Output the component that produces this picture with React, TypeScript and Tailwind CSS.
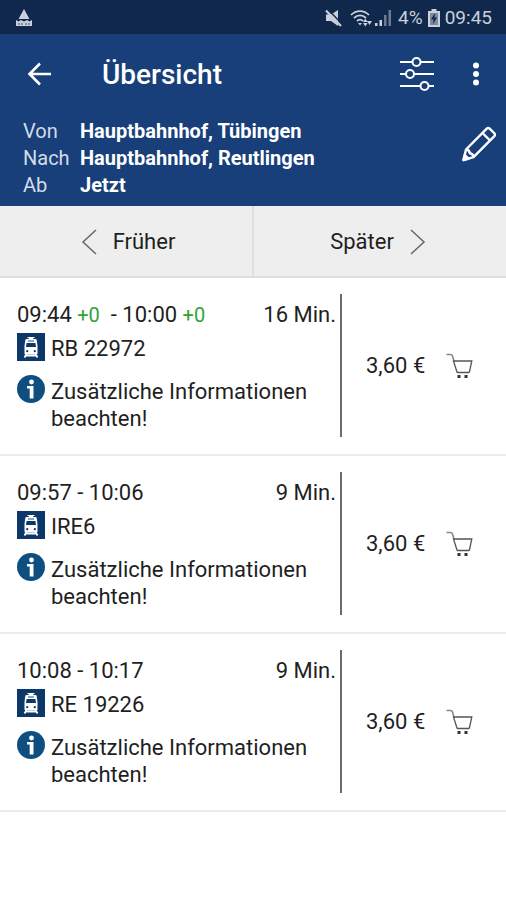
type Trip = {
  departure: string
  arrival: string
  delay?: string
  duration: string
  line: string
  price: string
}

const trips: Trip[] = [
  { departure: '09:44', arrival: '10:00', delay: '+0', duration: '16 Min.', line: 'RB 22972', price: '3,60 €' },
  { departure: '09:57', arrival: '10:06', duration: '9 Min.', line: 'IRE6', price: '3,60 €' },
  { departure: '10:08', arrival: '10:17', duration: '9 Min.', line: 'RE 19226', price: '3,60 €' },
]

const query = [
  { label: 'Von', value: 'Hauptbahnhof, Tübingen' },
  { label: 'Nach', value: 'Hauptbahnhof, Reutlingen' },
  { label: 'Ab', value: 'Jetzt' },
]

function StatusBar() {
  return (
    <div className="flex h-[34px] items-center bg-[#10284b] pt-[2px] pr-[14px] pl-4 text-[#c9d0dc]">
      <svg width="16" height="18" viewBox="0 0 16 18" fill="currentColor" aria-hidden="true">
        <path d="M8 0 13.500 10h-11Z" />
        <path d="M0 11l2.500 1.500L5 11l3 1.500L11 11l2.500 1.500L16 11v6H0Z" />
        <path d="M3 16v-2M6 16v-2M10 16v-2M13 16v-2" stroke="#10284b" strokeWidth="0.800" />
      </svg>
      <div className="ml-auto flex items-center">
        <svg width="17" height="18" viewBox="0 0 17 18" fill="currentColor" aria-hidden="true">
          <path d="M1 5.500h5L13 1v16l-7-5H1Z" />
          <path d="M2.500 0 17 15" stroke="#10284b" strokeWidth="1.500" />
          <path d="M1 1.500 16 17" stroke="currentColor" strokeWidth="2.200" />
        </svg>
        <svg className="ml-2" width="23" height="18" viewBox="0 0 23 18" fill="none" stroke="currentColor" strokeWidth="1.800" aria-hidden="true">
          <path d="M1 6c5-5.300 13-5.300 18 0M4 9c3.500-3.500 8.500-3.500 12 0M7 12c1.800-1.800 4.200-1.800 6 0" />
          <path d="M8 14h4l-2 2.500Z" fill="currentColor" stroke="none" />
          <path d="M13 13l2.300-3.500 2.300 3.500ZM17 12h5l-2.500 4ZM13 14h4.600l-2.300 3.500Z" fill="currentColor" stroke="none" />
        </svg>
        <svg className="ml-[2px]" width="17" height="18" viewBox="0 0 17 18" fill="currentColor" aria-hidden="true">
          <path d="M0 14h2.500v3H0ZM4.500 11H7v6H4.500Z" />
          <path d="M9 6h2.500v11H9ZM13.500 1H16v16h-2.500Z" opacity="0.5" />
        </svg>
        <span className="ml-[6px] text-[19px] leading-6">4%</span>
        <svg className="ml-[5px]" width="12" height="18" viewBox="0 0 12 18" aria-hidden="true">
          <path d="M3.500 0h5v2H12v16H0V2h3.500Z" fill="currentColor" />
          <path d="M2 4h8v12H2Z" fill="#7d899e" />
          <path d="M7 4 3 10.500h2.500L5 15l4-6.500H6.500Z" fill="#10284b" />
        </svg>
        <span className="ml-[5px] text-[19px] leading-6">09:45</span>
      </div>
    </div>
  )
}

function TrainIcon() {
  return (
    <svg className="shrink-0" width="28" height="28" viewBox="0 0 28 28" aria-hidden="true">
      <path d="M0 0h28v28H0Z" fill="#0c3768" />
      <path d="M10.500 4h7v1.200h-7Z" fill="#fff" />
      <path d="M12 5h4v1.500h-4Z" fill="#fff" />
      <path d="M9.500 6h9q1 0 1.200 1L20.500 13v7.500q0 1-1 1h-11q-1 0-1-1V13L8.300 7q.2-1 1.200-1Z" fill="#fff" />
      <path d="M9.600 10h8.800l.6 4H9Z" fill="#0c3768" />
      <path d="M11 8h6" stroke="#0c3768" strokeWidth="0.900" />
      <circle cx="10.200" cy="18.200" r="1.100" fill="#0c3768" />
      <circle cx="17.800" cy="18.200" r="1.100" fill="#0c3768" />
      <path d="M9.500 21 7.500 24.500M18.500 21l2 3.500M9 22.500h10" stroke="#fff" strokeWidth="1.800" />
    </svg>
  )
}

function InfoIcon() {
  return (
    <svg className="shrink-0" width="28" height="28" viewBox="0 0 28 28" aria-hidden="true">
      <circle cx="14" cy="14" r="14" fill="#0e4f7f" />
      <circle cx="14.500" cy="7" r="2.400" fill="#fff" />
      <path d="M10 11h6.500v12.500h-3.800V13.500H10Z" fill="#fff" />
    </svg>
  )
}

function CartIcon() {
  return (
    <svg width="28" height="26" viewBox="0 0 28 26" fill="none" stroke="#555" strokeWidth="1.300" aria-hidden="true">
      <path d="M0.500 1.500h4q1.500 0 2 1.500l1.500 5" stroke="#888" strokeWidth="1.600" />
      <path d="M7.500 8h18.300l-2.300 10.500q-.2 1-1.200 1H12q-1 0-1.200-1Z" />
      <path d="M11.500 22h3v3h-3ZM18.500 22h3v3h-3Z" fill="#333" stroke="none" />
    </svg>
  )
}

function Delay({ value }: { value: string }) {
  return <span className="text-[20px] text-[#2fa336]">{value}</span>
}

function TripRow({ trip }: { trip: Trip }) {
  return (
    <li className="flex border-b-2 border-[#ececec] pt-4 pb-[17px]">
      <div className="flex flex-1 flex-col border-r-2 border-[#6b6b6b] pt-[5px] pr-1 pb-[5px] pl-[17px]">
        <div className="flex justify-between leading-8 whitespace-pre">
          <span>
            {trip.departure}
            {trip.delay && <> <Delay value={trip.delay} /> </>}
            {' - '}
            {trip.arrival}
            {trip.delay && <> <Delay value={trip.delay} /></>}
          </span>
          <span>{trip.duration}</span>
        </div>
        <div className="mt-[2px] flex items-start gap-[6px]">
          <TrainIcon />
          <span className="leading-8">{trip.line}</span>
        </div>
        <div className="mt-[10px] flex gap-[6px]">
          <InfoIcon />
          <p className="pt-[3px] leading-[27px]">Zusätzliche Informationen beachten!</p>
        </div>
      </div>
      <div className="flex w-[164px] shrink-0 items-center pl-6">
        <span>{trip.price}</span>
        <button type="button" aria-label="In den Warenkorb" className="ml-auto pr-8">
          <CartIcon />
        </button>
      </div>
    </li>
  )
}

export default function App() {
  return (
    <div className="min-h-screen bg-white font-[Roboto,sans-serif] text-[22px] text-[#1f1f1f]">
      <StatusBar />

      <header className="bg-[#183f79] pb-[7px] text-white">
        <div className="flex h-20 items-center pr-[26px] pl-[27px]">
          <button type="button" aria-label="Zurück">
            <svg width="24" height="24" viewBox="0 0 24 24" fill="none" stroke="currentColor" strokeWidth="2.600" aria-hidden="true">
              <path d="M24 12H3M13 1.500 2.500 12 13 22.500" />
            </svg>
          </button>
          <h1 className="ml-[51px] pt-[2px] text-[28px] font-medium">Übersicht</h1>
          <button type="button" aria-label="Filter" className="ml-auto">
            <svg width="34" height="36" viewBox="0 0 34 36" fill="none" stroke="currentColor" strokeWidth="2" aria-hidden="true">
              <path d="M0 6h12.500M20.500 6H34M0 18h6M14 18h20M0 30h20.500M28.500 30H34" />
              <circle cx="16.500" cy="6" r="4" />
              <circle cx="10" cy="18" r="4" />
              <circle cx="24.500" cy="30" r="4" />
            </svg>
          </button>
          <button type="button" aria-label="Mehr" className="ml-[38px]">
            <svg width="8" height="24" viewBox="0 0 8 24" fill="currentColor" aria-hidden="true">
              <circle cx="4" cy="3.500" r="3" />
              <circle cx="4" cy="12" r="3" />
              <circle cx="4" cy="20.500" r="3" />
            </svg>
          </button>
        </div>

        <div className="flex items-start justify-between pr-[10px] pl-[23px]">
          <dl className="pt-1 text-[20px] leading-[27px]">
            {query.map((q) => (
              <div key={q.label} className="flex">
                <dt className="w-[57px] text-[#d3dcea]">{q.label}</dt>
                <dd className="font-bold">{q.value}</dd>
              </div>
            ))}
          </dl>
          <button type="button" aria-label="Bearbeiten" className="pt-3">
            <svg width="34" height="36" viewBox="0 0 34 36" fill="none" stroke="currentColor" strokeWidth="2.400" strokeLinejoin="round" aria-hidden="true">
              <path d="M1.500 34 4 23.500 24.500 2.800q1.700-1.600 3.400 0l4.200 4.200q1.700 1.700 0 3.400L11.500 31.200Z" />
              <path d="M4 23.500q3.500 0 3.700 3.700 3.500.3 3.800 4M20.500 7l7.500 7.500" />
              <path d="M1.500 34l1.300-5 3.700 3.700Z" fill="currentColor" />
            </svg>
          </button>
        </div>
      </header>

      <nav className="flex h-[72px] border-b-2 border-[#dedede] bg-[#eee]">
        <button type="button" className="flex flex-1 items-center justify-center gap-4 border-r-2 border-[#dedede] pt-px pl-1">
          <svg width="16" height="26" viewBox="0 0 16 26" fill="none" stroke="#666" strokeWidth="1.500" aria-hidden="true">
            <path d="M15 1 2 13l13 12" />
          </svg>
          Früher
        </button>
        <button type="button" className="flex flex-1 items-center justify-center gap-4 pt-px pr-1">
          Später
          <svg width="16" height="26" viewBox="0 0 16 26" fill="none" stroke="#666" strokeWidth="1.500" aria-hidden="true">
            <path d="M1 1l13 12L1 25" />
          </svg>
        </button>
      </nav>

      <ul>
        {trips.map((trip) => (
          <TripRow key={trip.line} trip={trip} />
        ))}
      </ul>
    </div>
  )
}
